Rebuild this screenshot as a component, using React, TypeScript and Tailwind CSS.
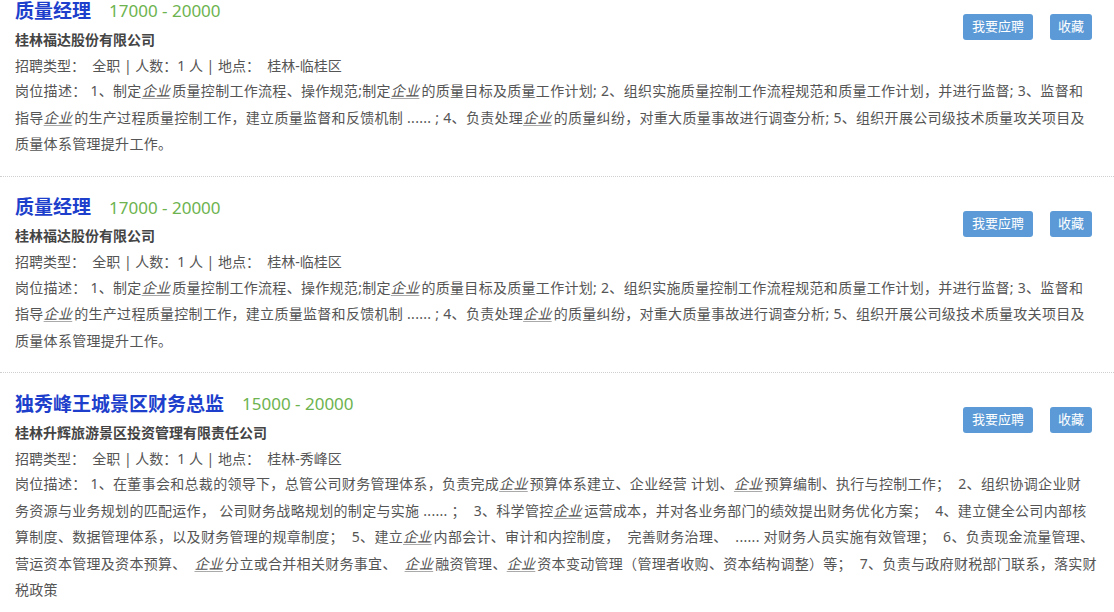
import type { ReactNode } from "react";

// 企业 words are rendered as small italic links in the listing
function Qy() {
  return <span className="italic underline underline-offset-2 decoration-[#aaa] pr-[2px]">企业</span>;
}

type Job = {
  title: string;
  salary: string;
  company: string;
  area: string;
  desc: ReactNode[];
};

const jobs: Job[] = [
  {
    title: "质量经理",
    salary: "17000 - 20000",
    company: "桂林福达股份有限公司",
    area: "桂林-临桂区",
    desc: [
      <>岗位描述： 1、制定<Qy />质量控制工作流程、操作规范;制定<Qy />的质量目标及质量工作计划; 2、组织实施质量控制工作流程规范和质量工作计划，并进行监督; 3、监督和</>,
      <>指导<Qy />的生产过程质量控制工作，建立质量监督和反馈机制 ...... ; 4、负责处理<Qy />的质量纠纷，对重大质量事故进行调查分析; 5、组织开展公司级技术质量攻关项目及</>,
      <>质量体系管理提升工作。</>,
    ],
  },
  {
    title: "质量经理",
    salary: "17000 - 20000",
    company: "桂林福达股份有限公司",
    area: "桂林-临桂区",
    desc: [
      <>岗位描述： 1、制定<Qy />质量控制工作流程、操作规范;制定<Qy />的质量目标及质量工作计划; 2、组织实施质量控制工作流程规范和质量工作计划，并进行监督; 3、监督和</>,
      <>指导<Qy />的生产过程质量控制工作，建立质量监督和反馈机制 ...... ; 4、负责处理<Qy />的质量纠纷，对重大质量事故进行调查分析; 5、组织开展公司级技术质量攻关项目及</>,
      <>质量体系管理提升工作。</>,
    ],
  },
  {
    title: "独秀峰王城景区财务总监",
    salary: "15000 - 20000",
    company: "桂林升辉旅游景区投资管理有限责任公司",
    area: "桂林-秀峰区",
    desc: [
      <>岗位描述： 1、在董事会和总裁的领导下，总管公司财务管理体系，负责完成<Qy />预算体系建立、企业经营 计划、<Qy />预算编制、执行与控制工作；  2、组织协调企业财</>,
      <>务资源与业务规划的匹配运作， 公司财务战略规划的制定与实施 ...... ；  3、科学管控<Qy />运营成本，并对各业务部门的绩效提出财务优化方案；  4、建立健全公司内部核</>,
      <>算制度、数据管理体系，以及财务管理的规章制度；  5、建立<Qy />内部会计、审计和内控制度，  完善财务治理、  ...... 对财务人员实施有效管理；  6、负责现金流量管理、</>,
      <>营运资本管理及资本预算、  <Qy />分立或合并相关财务事宜、  <Qy />融资管理、<Qy />资本变动管理（管理者收购、资本结构调整）等；  7、负责与政府财税部门联系，落实财</>,
      <>税政策</>,
    ],
  },
];

function JobItem({ job, first }: { job: Job; first: boolean }) {
  return (
    <div
      className={`flex pl-[15px] pr-[22px] pb-[18px] border-b border-dotted border-[#cfcfcf] ${
        first ? "pt-0" : "pt-[20px]"
      }`}
    >
      <div className="flex-1 min-w-0">
        <div className="flex items-center h-[22px] gap-[18px]">
          <span className="text-[19px] font-bold text-[#1d3fcc]">{job.title}</span>
          <span className="text-[17px] text-[#6db34f]">{job.salary}</span>
        </div>
        <div className="mt-[4px] h-[26px] flex items-center text-[14px] font-bold text-[#444]">
          {job.company}
        </div>
        <div className="h-[26px] flex items-center text-[14px] text-[#555] whitespace-pre">
          {`招聘类型：  全职 | 人数：1 人 | 地点：  ${job.area}`}
        </div>
        <div className="text-[14px] text-[#555] leading-[26.5px] tracking-[0.3px]">
          {job.desc.map((line, i) => (
            <div key={i} className="whitespace-pre">
              {line}
            </div>
          ))}
        </div>
      </div>
      <div className="flex gap-[17px] mt-[14px] shrink-0 items-start">
        <button className="h-[26px] px-[9px] rounded-[3px] bg-[#5b9ad6] text-white text-[13px]">
          我要应聘
        </button>
        <button className="h-[26px] px-[8px] rounded-[3px] bg-[#5b9ad6] text-white text-[13px]">
          收藏
        </button>
      </div>
    </div>
  );
}

export default function App() {
  return (
    <div
      className="w-[1114px] h-[612px] overflow-hidden bg-white"
      style={{ fontFamily: '"Noto Sans", "Noto Sans CJK SC", sans-serif' }}
    >
      {jobs.map((job, i) => (
        <JobItem key={i} job={job} first={i === 0} />
      ))}
    </div>
  );
}
